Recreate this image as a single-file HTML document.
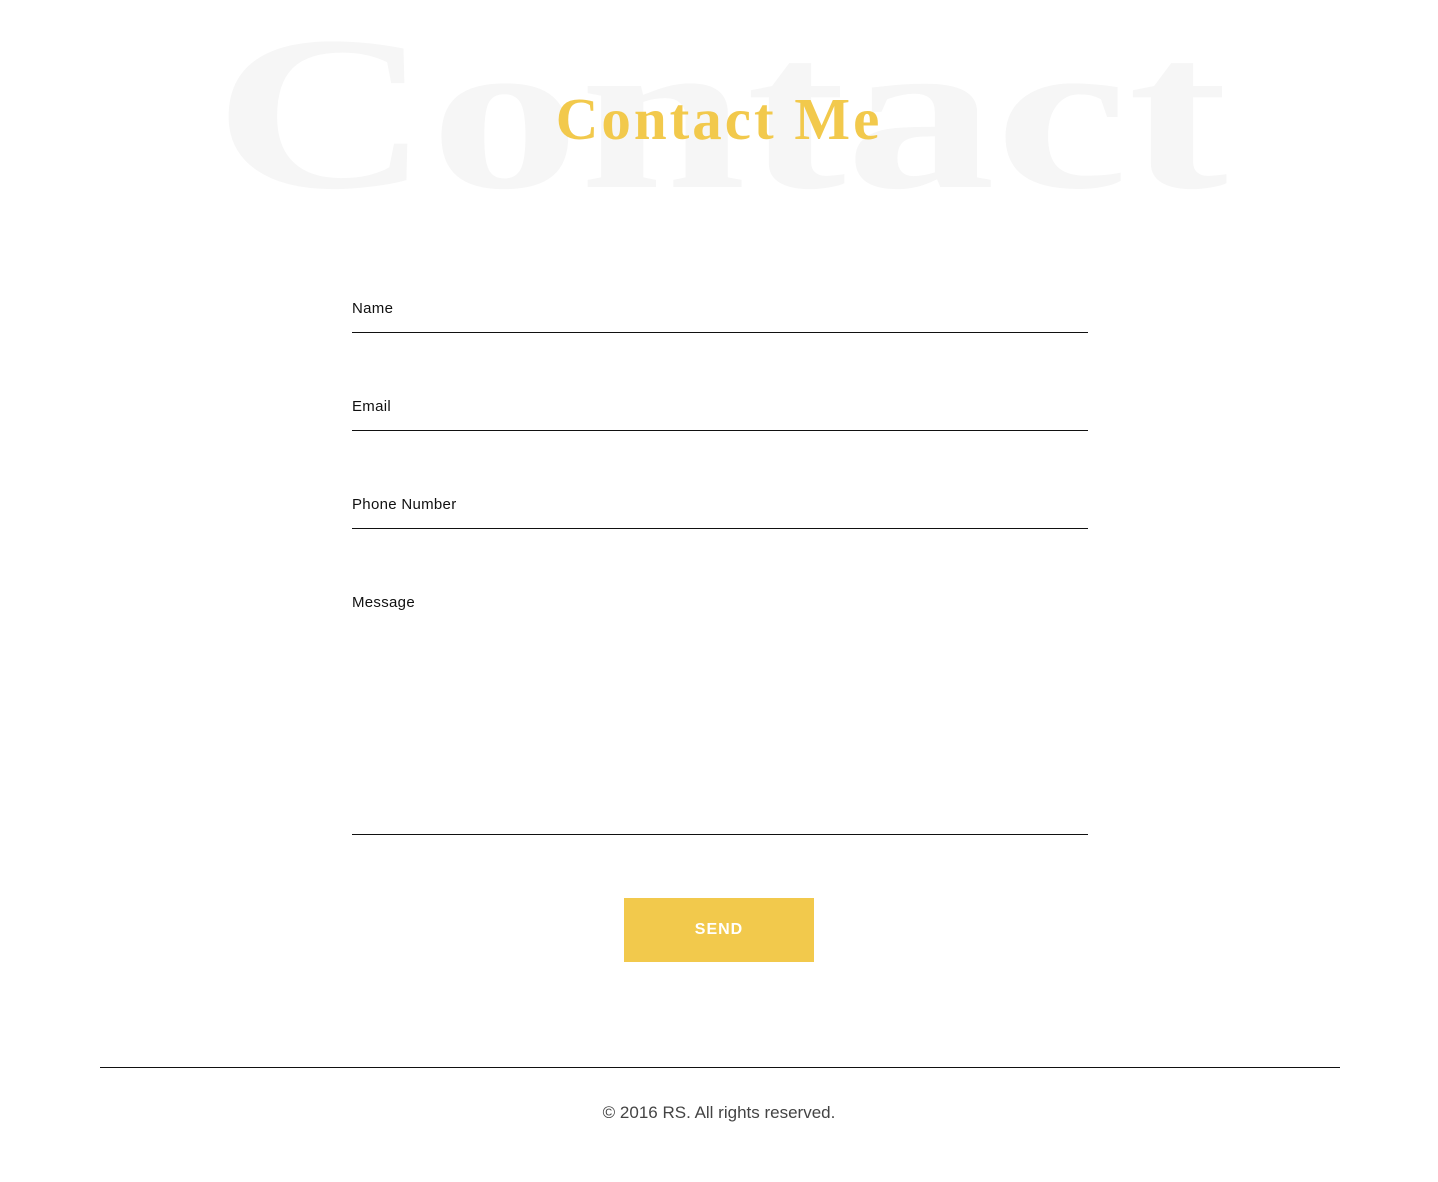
<!DOCTYPE html>
<html><head><meta charset="utf-8"><style>
html,body{margin:0;padding:0;background:#fff;}
body{width:1438px;height:1182px;position:relative;overflow:hidden;font-family:"Liberation Sans",sans-serif;}
.bg{position:absolute;left:214px;top:3px;font-family:"Liberation Serif",serif;font-weight:bold;font-size:220px;line-height:220px;color:#f6f6f6;white-space:nowrap;transform:scaleX(1.36);transform-origin:0 0;}
.title{position:absolute;left:0;width:1438px;text-align:center;top:84px;font-family:"Liberation Serif",serif;font-weight:bold;font-size:59px;line-height:70px;color:#f2c94c;letter-spacing:3px;}
.lbl{position:absolute;left:352px;font-size:15px;color:#111;letter-spacing:0.3px;}
.line{position:absolute;left:352px;width:736px;height:1px;background:#111;}
.btn{position:absolute;left:624px;top:898px;width:190px;height:64px;background:#f2c94c;color:#fff;font-weight:bold;font-size:16px;letter-spacing:1px;text-align:center;line-height:64px;}
.fl{position:absolute;left:100px;top:1067px;width:1240px;height:1px;background:#111;}
.ft{position:absolute;left:0;width:1438px;text-align:center;top:1103px;font-size:17px;color:#444;}
</style></head><body>
<div class="bg">Contact</div>
<div class="title">Contact Me</div>
<div class="lbl" style="top:300px">Name</div><div class="line" style="top:332px"></div>
<div class="lbl" style="top:398px">Email</div><div class="line" style="top:430px"></div>
<div class="lbl" style="top:496px">Phone Number</div><div class="line" style="top:528px"></div>
<div class="lbl" style="top:594px">Message</div><div class="line" style="top:834px"></div>
<div class="btn">SEND</div>
<div class="fl"></div>
<div class="ft">© 2016 RS. All rights reserved.</div>
</body></html>
